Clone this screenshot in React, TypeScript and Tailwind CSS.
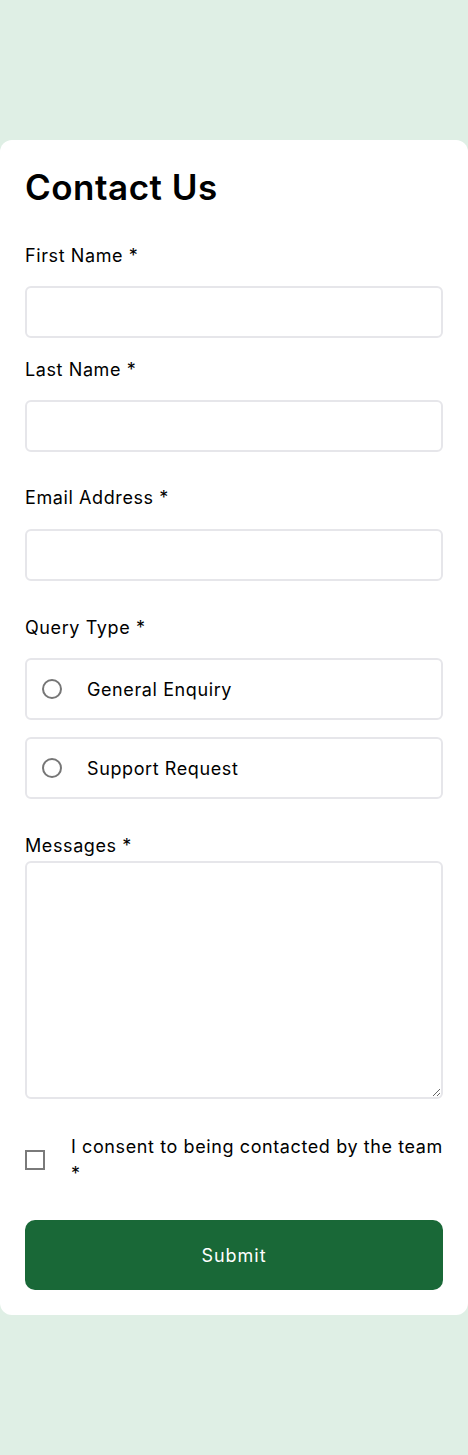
import React from "react";

const font = { fontFamily: 'Inter, "Liberation Sans", sans-serif' };

const Label = ({ children, className = "" }: { children: React.ReactNode; className?: string }) => (
  <label className={`block text-[18px] leading-6 tracking-[0.6px] text-black ${className}`}>{children}</label>
);

const Radio = ({ text }: { text: string }) => (
  <label className="flex h-[62px] items-center rounded-md border-2 border-[#e6e6ea] pl-[15px]">
    <span className="h-5 w-5 rounded-full border-2 border-[#767676]" />
    <span className="ml-[25px] text-[18px] tracking-[0.6px] text-black">{text}</span>
  </label>
);

const App = () => {
  return (
    <div className="min-h-[1455px] bg-[#dfefe5] pt-[140px]" style={font}>
      <form className="rounded-xl bg-white px-[25px] pt-[27px] pb-[25px]">
        <h1 className="text-[35px] font-semibold leading-[41px] tracking-[0.5px] text-black">Contact Us</h1>

        <Label className="mt-[36px]">First Name *</Label>
        <input className="mt-[18px] block h-[52px] w-full rounded-md border-2 border-[#e6e6ea]" />

        <Label className="mt-[20px]">Last Name *</Label>
        <input className="mt-[18px] block h-[52px] w-full rounded-md border-2 border-[#e6e6ea]" />

        <Label className="mt-[34px]">Email Address *</Label>
        <input className="mt-[19px] block h-[52px] w-full rounded-md border-2 border-[#e6e6ea]" />

        <Label className="mt-[35px]">Query Type *</Label>
        <div className="mt-[18px] flex flex-col gap-[17px]">
          <Radio text="General Enquiry" />
          <Radio text="Support Request" />
        </div>

        <Label className="mt-[35px]">Messages *</Label>
        <textarea className="mt-[3px] block h-[238px] w-full rounded-md border-2 border-[#e6e6ea]" />

        <div className="mt-[34px] flex items-center">
          <span className="h-5 w-5 shrink-0 border-2 border-[#7a7a7a]" />
          <span className="ml-[26px] text-[18px] leading-[27px] tracking-[0.6px] text-black">
            I consent to being contacted by the team
            <br />*
          </span>
        </div>

        <button
          type="button"
          className="mt-[33px] block h-[70px] w-full rounded-[10px] bg-[#196837] text-[18px] tracking-[1px] text-white"
        >
          Submit
        </button>
      </form>
    </div>
  );
};

export default App;
